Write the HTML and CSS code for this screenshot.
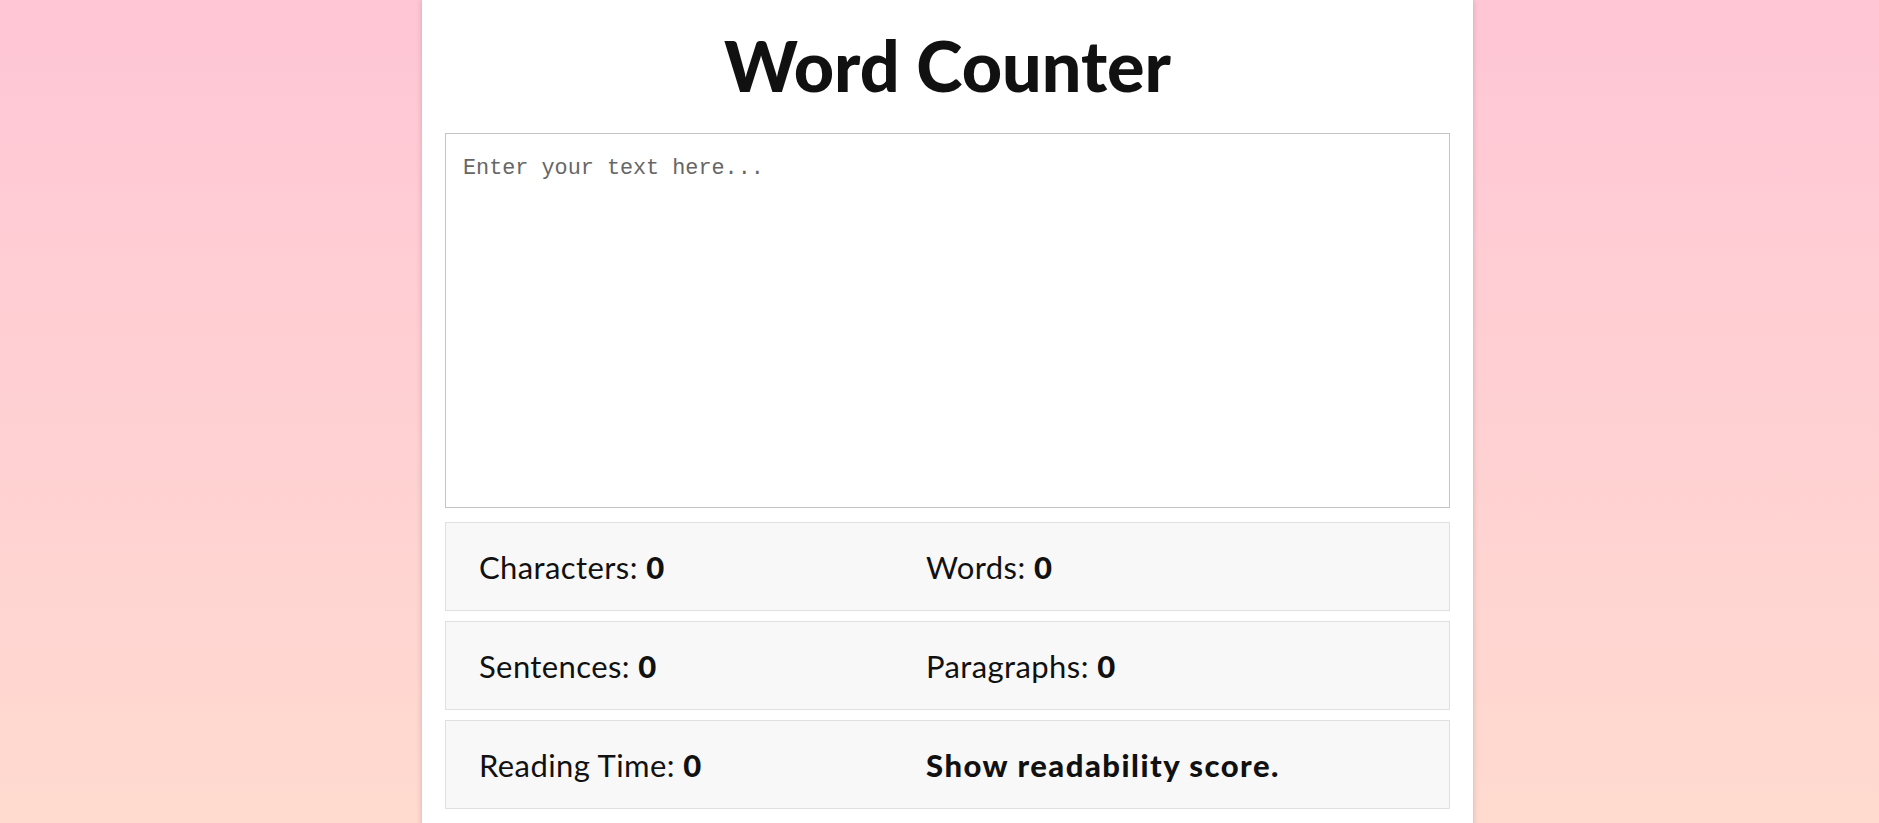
FILE: index.html
```html
<!DOCTYPE html>
<html lang="en">
<head>
<meta charset="utf-8">
<title>Word Counter</title>
<link rel="stylesheet" href="styles.css">
</head>
<body>
<main class="card">
  <h1 class="title">Word Counter</h1>
  <textarea class="input" placeholder="Enter your text here..."></textarea>
  <section class="stats">
    <div class="row">
      <div class="stat">Characters: <b>0</b></div>
      <div class="stat">Words: <b>0</b></div>
    </div>
    <div class="row">
      <div class="stat">Sentences: <b>0</b></div>
      <div class="stat">Paragraphs: <b>0</b></div>
    </div>
    <div class="row">
      <div class="stat">Reading Time: <b>0</b></div>
      <div class="stat stat-strong">Show readability score.</div>
    </div>
  </section>
</main>
</body>
</html>
```

FILE: styles.css
```css
html, body {
  margin: 0;
  padding: 0;
}

body {
  min-height: 100vh;
  background: linear-gradient(180deg, #ffc6d6 0%, #ffdbcf 100%);
  font-family: Lato, "Noto Sans", sans-serif;
  color: #111111;
}

.card {
  box-sizing: border-box;
  width: 1051px;
  margin-left: 422px;
  min-height: 100vh;
  padding: 30px 23px 30px 23px;
  background: #ffffff;
  box-shadow: 0 0 6px rgba(0, 0, 0, 0.18);
}

.title {
  margin: 0 0 33px 0;
  font-size: 70px;
  line-height: 70px;
  font-weight: 900;
  text-align: center;
  letter-spacing: 0;
}

.input {
  display: block;
  box-sizing: border-box;
  width: 100%;
  height: 375px;
  margin: 0;
  padding: 22px 17px 21px 17px;
  border: 1px solid #c4c4c4;
  border-radius: 0;
  resize: none;
  font-family: "Liberation Mono", "DejaVu Sans Mono", monospace;
  font-size: 21.8px;
  line-height: 26px;
  color: #111111;
  background: #ffffff;
}

.input::placeholder {
  color: #666666;
}

.stats {
  display: flex;
  flex-direction: column;
  gap: 10px;
  margin-top: 14px;
}

.row {
  box-sizing: border-box;
  height: 89px;
  display: grid;
  grid-template-columns: 447px 1fr;
  align-items: center;
  padding-left: 33px;
  background: #f8f8f8;
  border: 1px solid #e0e0e0;
}

.stat {
  font-size: 31px;
  line-height: 36px;
  font-weight: 400;
  letter-spacing: 0.4px;
}

.stat b {
  font-weight: 900;
}

.stat-strong {
  font-weight: 900;
  letter-spacing: 1.5px;
}
```
